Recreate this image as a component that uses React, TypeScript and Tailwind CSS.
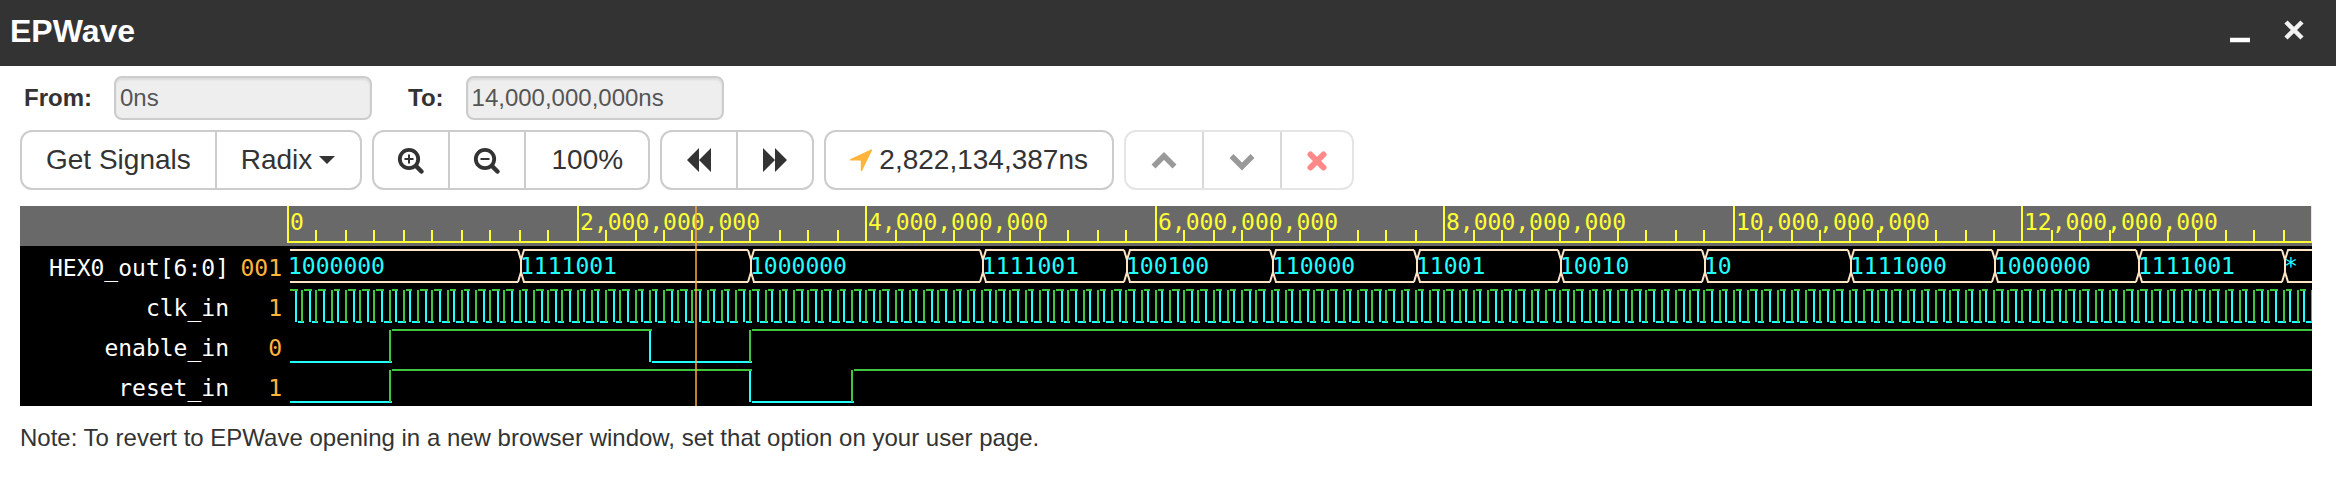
import { useId } from "react";
import type { ReactNode } from "react";

const PX_PER_GNS = 72.285;
const ORIGIN = 2;
const END = 14;

const at = (t: number) => ORIGIN + 2 * Math.round(t * PX_PER_GNS + 0.02);

type Level = { t: number; v: 0 | 1 };

const clock: Level[] = Array.from({ length: 281 }, (_, i) => ({
  t: i * 0.05,
  v: i % 2 === 0 ? 1 : 0,
}));

const enable: Level[] = [
  { t: 0, v: 0 },
  { t: 0.7, v: 1 },
  { t: 2.5, v: 0 },
  { t: 3.2, v: 1 },
];

const reset: Level[] = [
  { t: 0, v: 0 },
  { t: 0.7, v: 1 },
  { t: 3.2, v: 0 },
  { t: 3.9, v: 1 },
];

const bus = [
  { t: 0, text: "1000000" },
  { t: 1.6, text: "1111001" },
  { t: 3.2, text: "1000000" },
  { t: 4.8, text: "1111001" },
  { t: 5.8, text: "100100" },
  { t: 6.8, text: "110000" },
  { t: 7.8, text: "11001" },
  { t: 8.8, text: "10010" },
  { t: 9.8, text: "10" },
  { t: 10.8, text: "1111000" },
  { t: 11.8, text: "1000000" },
  { t: 12.8, text: "1111001" },
  { t: 13.8, text: "*" },
];

const signals = [
  { name: "HEX0_out[6:0]", value: "001" },
  { name: "clk_in", value: "1" },
  { name: "enable_in", value: "0" },
  { name: "reset_in", value: "1" },
];

function Ruler() {
  const ticks = Array.from({ length: 71 }, (_, i) => i);
  return (
    <g>
      <rect width="100%" height="40" fill="#696969" />
      <path
        d={ticks
          .map((i) => `M${at(i * 0.2)} ${i % 10 === 0 ? 0 : 24}V36`)
          .join("") + `M${ORIGIN - 1} 36H${at(END)}`}
        stroke="#ffff33"
        strokeWidth="2"
      />
      {[0, 2, 4, 6, 8, 10, 12].map((t) => (
        <text key={t} x={at(t) + 2} y="24" fill="#ffff33">
          {(t * 1e9).toLocaleString("en-US")}
        </text>
      ))}
    </g>
  );
}

function BusWave({ y }: { y: number }) {
  const top = y + 4;
  const bottom = y + 36;
  const mid = y + 20;
  return (
    <g>
      {bus.map(({ t, text }, i) => {
        const x = at(t) + 1;
        const next = i + 1 < bus.length ? at(bus[i + 1].t) + 1 : at(END) + 6;
        const left =
          i === 0
            ? `M${x + 1} ${top}H${next - 3}M${x + 1} ${bottom}H${next - 3}`
            : `M${next - 3} ${top}H${x + 3}L${x} ${mid - 6}V${mid + 6}L${x + 3} ${bottom}H${next - 3}`;
        return (
          <g key={t}>
            <path
              d={`${left}M${next - 3} ${top}L${next} ${mid - 6}V${mid + 6}L${next - 3} ${bottom}`}
              fill="none"
              stroke="#ffe4c4"
              strokeWidth="2"
            />
            <text x={at(t)} y={y + 28} fill="#22ffff">
              {text}
            </text>
          </g>
        );
      })}
    </g>
  );
}

function BitWave({ y, levels }: { y: number; levels: Level[] }) {
  const top = y + 4;
  const bottom = y + 36;
  const high: string[] = [];
  const low: string[] = [];
  levels.forEach(({ t, v }, i) => {
    const x = at(t);
    const next = at(i + 1 < levels.length ? levels[i + 1].t : END);
    const out = v ? high : low;
    if (i > 0) out.push(`M${x} ${top}V${bottom}`);
    out.push(`M${x + 2} ${v ? top : bottom}H${next + 2}`);
  });
  return (
    <g fill="none" strokeWidth="2">
      <path d={low.join("")} stroke="#22ffff" />
      <path d={high.join("")} stroke="#3fc63f" />
    </g>
  );
}

function Group({ children, muted }: { children: ReactNode; muted?: boolean }) {
  return (
    <div
      className={
        "flex h-[60px] divide-x-2 rounded-xl border-2 bg-white " +
        (muted ? "divide-[#d9d9d9] border-[#e5e5e5]" : "divide-[#cccccc] border-[#cccccc]")
      }
    >
      {children}
    </div>
  );
}

function Tool({ children, label, disabled }: { children: ReactNode; label?: string; disabled?: boolean }) {
  return (
    <button
      type="button"
      aria-label={label}
      disabled={disabled}
      className="flex items-center justify-center px-6 text-[28px] leading-10 whitespace-nowrap"
    >
      {children}
    </button>
  );
}

function Magnifier({ plus }: { plus?: boolean }) {
  return (
    <svg width="26" height="28" viewBox="0 0 26 28" fill="none" stroke="#333333" className="overflow-visible">
      <circle cx="11" cy="13" r="9.200" strokeWidth="3.800" />
      <path d="M18 20L23.500 25.500" strokeWidth="4.500" strokeLinecap="round" />
      <path d={plus ? "M6.500 13H15.500M11 8.500V17.500" : "M6.500 13H15.500"} strokeWidth="2" />
    </svg>
  );
}

function Field({ label, value }: { label: string; value: string }) {
  const id = useId();
  return (
    <div className="flex items-center gap-[22px]">
      <label htmlFor={id} className="font-bold">
        {label}
      </label>
      <input
        id={id}
        readOnly
        value={value}
        className="h-11 w-[258px] rounded-lg border-2 border-[#cccccc] bg-[#eeeeee] px-1 text-[#555555] shadow-[inset_0_2px_2px_rgba(0,0,0,0.075)]"
      />
    </div>
  );
}

export default function App() {
  return (
    <div className="bg-white font-['Liberation_Sans',sans-serif] text-2xl text-[#333333]">
      <header className="flex h-[66px] items-center justify-between bg-[#333333] pr-[30px] pb-1 pl-2.5 text-white">
        <h1 className="text-[32px] leading-10 font-bold">EPWave</h1>
        <div className="flex items-center gap-[30px]">
          <button type="button" aria-label="Minimize">
            <svg width="24" height="24" viewBox="0 0 24 24" className="block">
              <path d="M2 21H22" stroke="#fff" strokeWidth="4.500" />
            </svg>
          </button>
          <button type="button" aria-label="Close">
            <svg width="24" height="24" viewBox="0 0 24 24" className="block">
              <path d="M4 3L20 19M20 3L4 19" stroke="#f2f2f2" strokeWidth="4.500" />
            </svg>
          </button>
        </div>
      </header>

      <main className="px-5">
        <div className="flex gap-9 pt-2.5 pl-1">
          <Field label="From:" value="0ns" />
          <Field label="To:" value="14,000,000,000ns" />
        </div>

        <div className="flex gap-2.5 pt-2.5">
          <Group>
            <Tool>Get Signals</Tool>
            <Tool>
              Radix
              <svg width="18" height="10" viewBox="0 0 18 10" className="ml-1.5">
                <path d="M1 1H17L9 9Z" fill="#333333" />
              </svg>
            </Tool>
          </Group>
          <Group>
            <Tool label="Zoom in">
              <Magnifier plus />
            </Tool>
            <Tool label="Zoom out">
              <Magnifier />
            </Tool>
            <Tool>
              <span className="min-w-[74px]">100%</span>
            </Tool>
          </Group>
          <Group>
            <Tool label="Previous edge">
              <svg width="26" height="28" viewBox="0 0 26 28" fill="#333333">
                <path d="M13 2V26L1 14ZM25 2V26L13 14Z" />
              </svg>
            </Tool>
            <Tool label="Next edge">
              <svg width="26" height="28" viewBox="0 0 26 28" fill="#333333">
                <path d="M1 2V26L13 14ZM13 2V26L25 14Z" />
              </svg>
            </Tool>
          </Group>
          <Group>
            <Tool>
              <svg width="22" height="22" viewBox="0 0 22 22" className="mr-[7px]">
                <path d="M21 0.500Q22.500 0 22 1.500L12 22L10.800 22V12.500Q10.800 11.500 9.800 11.500H0L0 10.200Z" fill="#ffb43c" />
              </svg>
              2,822,134,387ns
            </Tool>
          </Group>
          <Group muted>
            <Tool label="Move up" disabled>
              <svg width="28" height="28" viewBox="0 0 28 28" fill="none">
                <path d="M3.500 20.500L14 10L24.500 20.500" stroke="#999999" strokeWidth="5.500" />
              </svg>
            </Tool>
            <Tool label="Move down" disabled>
              <svg width="28" height="28" viewBox="0 0 28 28" fill="none">
                <path d="M3.500 10L14 20.500L24.500 10" stroke="#999999" strokeWidth="5.500" />
              </svg>
            </Tool>
            <Tool label="Remove" disabled>
              <svg width="22" height="28" viewBox="0 0 22 28" fill="none">
                <path d="M4.500 8.500L17.500 21.500M17.500 8.500L4.500 21.500" stroke="#ff8888" strokeWidth="6" strokeLinecap="round" />
              </svg>
            </Tool>
          </Group>
        </div>

        <section className="mt-4 mr-1 flex bg-black font-['DejaVu_Sans_Mono',monospace] text-[23px]">
          <div className="w-[266px] shrink-0">
            <div className="h-10 bg-[#696969]" />
            {signals.map((s) => (
              <div key={s.name} className="flex h-10 items-center justify-end pt-1 pr-1 text-white">
                <span>{s.name}</span>
                <span className="w-[53px] text-right text-[#ffb43c]">{s.value}</span>
              </div>
            ))}
          </div>
          <svg height="200" className="block min-w-0 flex-1">
            <Ruler />
            <BusWave y={40} />
            <BitWave y={80} levels={clock} />
            <BitWave y={120} levels={enable} />
            <BitWave y={160} levels={reset} />
            <path d={`M${at(2.822134387)} 0V200`} stroke="#ffa93c" strokeOpacity="0.75" strokeWidth="2" />
          </svg>
        </section>

        <p className="mt-3 leading-10">
          Note: To revert to EPWave opening in a new browser window, set that option on your user page.
        </p>
      </main>
    </div>
  );
}
